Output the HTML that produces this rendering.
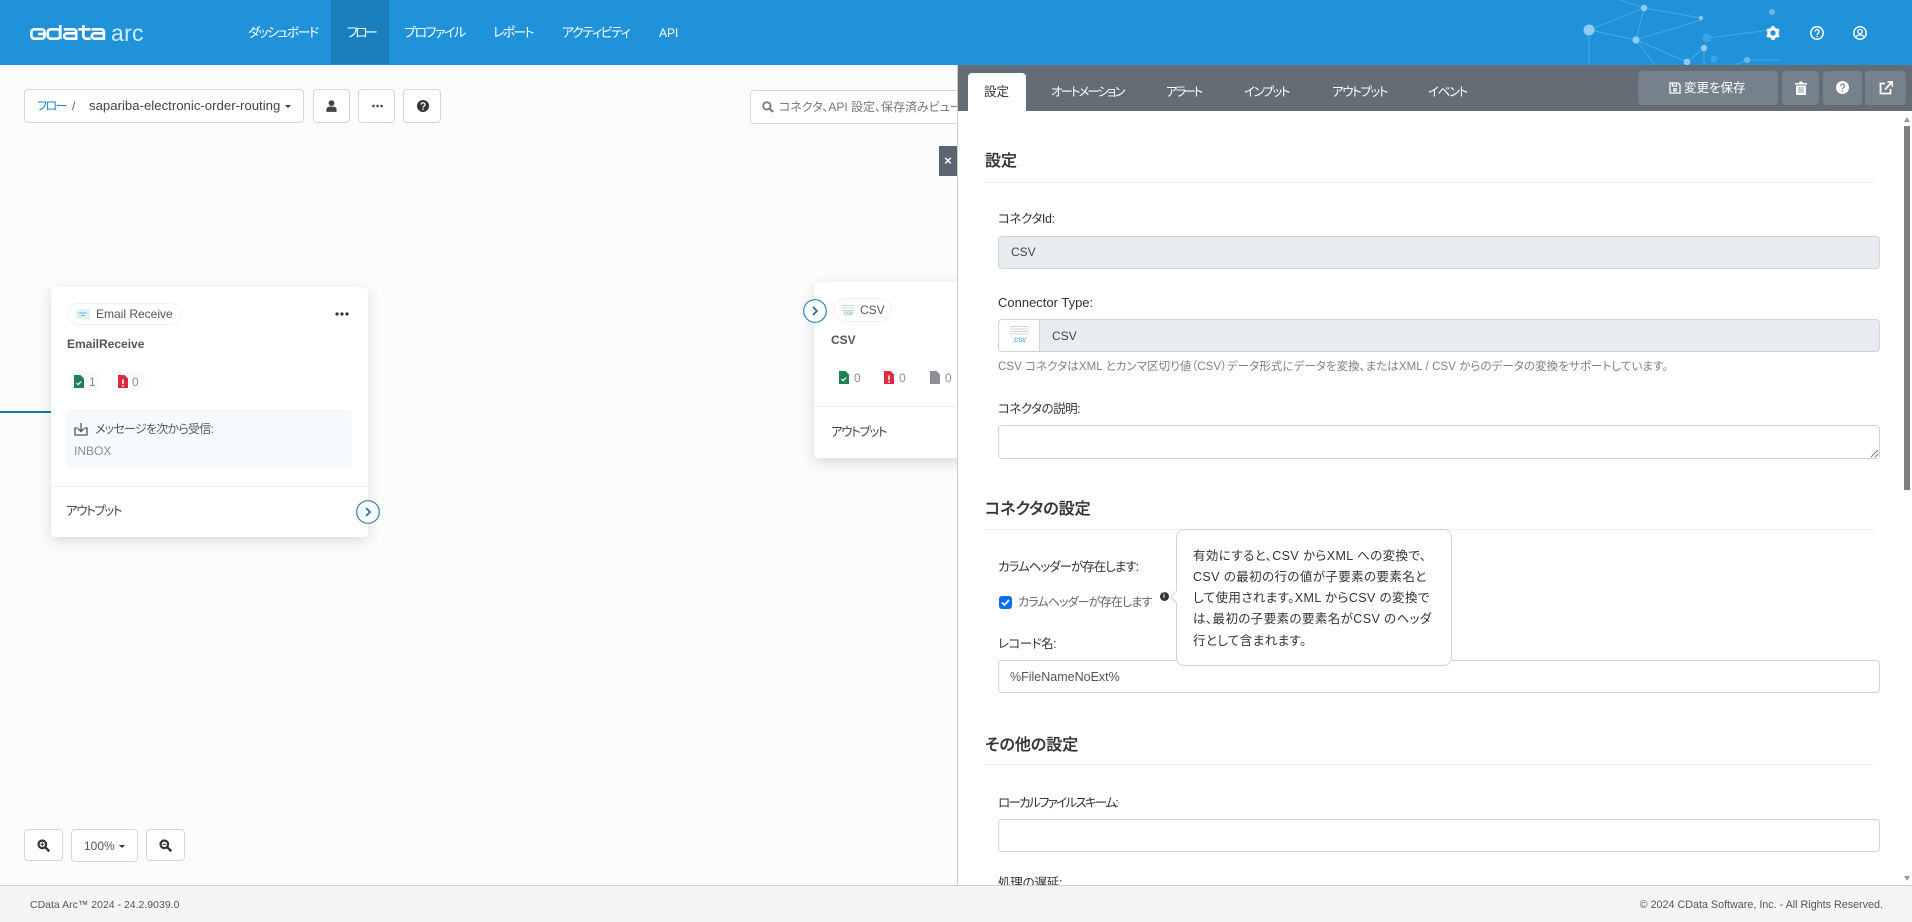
<!DOCTYPE html>
<html lang="ja"><head><meta charset="utf-8"><title>CData Arc</title>
<style>
*{box-sizing:border-box}
html,body{margin:0;padding:0;width:1912px;height:922px;overflow:hidden;background:#fcfcfc;font-family:"Liberation Sans","Noto Sans CJK JP",sans-serif;color:#333;font-feature-settings:"palt"}
.a{position:absolute}
.t{position:absolute;white-space:nowrap;line-height:20px;height:20px}
.box{position:absolute;background:#fff;border:1px solid #d4d7da;border-radius:4px}
.nav{color:#fff;font-size:13px;top:23px}
.tab{color:#fff;font-size:12.5px;top:82px}
.btn{position:absolute;background:#75818b;border-radius:4px;top:71px;height:34px}
.lab{font-size:12.5px;color:#333;left:998px;letter-spacing:-.2px}
.inp{position:absolute;left:998px;width:882px;border:1px solid #ced4da;border-radius:4px;background:#fff}
.dis{background:#e9ecef}
.h{font-size:16px;font-weight:500;color:#333;left:985px;-webkit-text-stroke:.2px #333}
.hr{position:absolute;left:985px;width:890px;height:1px;background:#eef0f1}
.card{position:absolute;background:#fff;border-radius:4px;box-shadow:0 4px 14px rgba(0,0,0,.14)}
.pill{position:absolute;background:#fff;border:1px solid #eef0f2;border-radius:12px}
.s{font-size:12px;color:#8a8f94}
.tip{position:absolute;left:1193px;white-space:nowrap;line-height:20px;height:20px;font-size:12.5px;color:#333;letter-spacing:.4px}
</style></head><body>

<!-- header -->
<div class="a" style="left:0;top:0;width:1912px;height:65px;background:#1f92d9"></div>
<div class="a" style="left:331px;top:0;width:58px;height:64px;background:#1b7fbe"></div>
<svg class="a" style="left:1500px;top:0" width="412" height="65" viewBox="1500 0 412 65">
<g stroke="#6fb9ea" stroke-width="1" fill="none" opacity=".55">
<path d="M1589 30L1644 8L1701 18M1644 8L1636 40L1589 30M1636 40L1701 20M1636 40L1687 62M1636 40L1655 65M1704 48L1687 62M1704 48V65M1707 38L1770 30M1747 60L1780 60M1747 60L1735 65M1589 30V65M1620 0L1644 8"/>
</g>
<g fill="#8fcaf3">
<circle cx="1589" cy="30" r="5.5"/><circle cx="1644" cy="8" r="3.2"/><circle cx="1701" cy="18" r="2"/><circle cx="1636" cy="40" r="3.6"/><circle cx="1704" cy="48" r="3.2"/><circle cx="1687" cy="62" r="3.4"/><circle cx="1747" cy="60" r="3.2" fill="#6fb5e3"/><circle cx="1772" cy="12" r="3" fill="#6fb5e3"/>
</g>
<circle cx="1707" cy="38" r="4.5" fill="#3ba4e6"/><circle cx="1714" cy="59" r="3.5" fill="#3ba4e6"/>
</svg>
<!-- logo -->
<svg class="a" style="left:30px;top:25px" width="78" height="16" viewBox="0 0 76 16" preserveAspectRatio="none" fill="none" stroke="#fff" stroke-width="2.6">
<rect x="1.3" y="4.3" width="13" height="9.4" rx="3"/><path d="M8 9h6"/>
<rect x="17.3" y="4.3" width="12" height="9.4" rx="3"/><path d="M29.5 0v14"/>
<path d="M33 4.3h9.5a2.5 2.5 0 0 1 2.5 2.5v6.9h-9a2.7 2.7 0 0 1 0-5.4h9"/>
<path d="M47 4.3h12M52 0v11a2.7 2.7 0 0 0 2.7 2.7H59"/>
<path d="M60 4.3h9.5a2.5 2.5 0 0 1 2.5 2.5v6.9h-9a2.7 2.7 0 0 1 0-5.4h9"/>
</svg>
<div class="t" style="left:111px;top:21px;color:#d5eafa;font-size:23px;letter-spacing:.3px;line-height:24px;height:24px">arc</div>
<div class="t nav" style="left:248px;letter-spacing:-1.6px">ダッシュボード</div>
<div class="t nav" style="left:347px;letter-spacing:-2.8px">フロー</div>
<div class="t nav" style="left:404px;letter-spacing:-1.5px">プロファイル</div>
<div class="t nav" style="left:493px;letter-spacing:-1.8px">レポート</div>
<div class="t nav" style="left:562px;letter-spacing:-1.4px">アクティビティ</div>
<div class="t nav" style="left:659px;font-size:12px">API</div>
<!-- header icons -->
<svg class="a" style="left:1766px;top:26px" width="14" height="14" viewBox="0 0 14 14"><circle cx="7" cy="7" r="4.2" fill="none" stroke="#fff" stroke-width="3"/><path d="M7 0V3M7 11v3M1 3.500l2.600 1.500M10.400 9L13 10.500M1 10.500L3.600 9M10.400 5L13 3.500" stroke="#fff" stroke-width="3"/></svg>
<svg class="a" style="left:1810px;top:26px" width="14" height="14" viewBox="0 0 14 14" fill="none" stroke="#fff"><circle cx="7" cy="7" r="6.2" stroke-width="1.5"/><path d="M5 5.6a2 2 0 1 1 3.1 1.7C7.3 7.8 7 8.1 7 8.9" stroke-width="1.3"/><circle cx="7" cy="10.5" r=".8" fill="#fff" stroke="none"/></svg>
<svg class="a" style="left:1853px;top:26px" width="14" height="14" viewBox="0 0 14 14" fill="none" stroke="#fff"><circle cx="7" cy="7" r="6.2" stroke-width="1.5"/><circle cx="7" cy="5.6" r="2.2" stroke-width="1.3"/><path d="M3 11c.8-1.6 2.2-2 4-2s3.2.4 4 2" stroke-width="1.3"/></svg>

<!-- toolbar left -->
<div class="box" style="left:24px;top:89px;width:280px;height:34px"></div>
<div class="t" style="left:37px;top:96px;font-size:12px;color:#1f7fc0;letter-spacing:-1.5px">フロー</div>
<div class="t" style="left:72px;top:96px;font-size:12px;color:#555">/</div>
<div class="t" style="left:89px;top:96px;font-size:13.2px;color:#444">sapariba-electronic-order-routing</div>
<div class="a" style="left:285px;top:105px;border-left:3px solid transparent;border-right:3px solid transparent;border-top:3px solid #333"></div>
<div class="box" style="left:313px;top:89px;width:37px;height:34px"></div>
<svg class="a" style="left:326px;top:100px" width="11" height="12" viewBox="0 0 13 14" fill="#444"><circle cx="6.500" cy="3.600" r="3.400"/><path d="M0.500 14v-2.500c0-2.400 2-3.700 3.600-3.700h4.800c1.600 0 3.600 1.300 3.600 3.700V14z"/></svg>
<div class="box" style="left:358px;top:89px;width:37px;height:34px"></div>
<svg class="a" style="left:372px;top:104px" width="11" height="4" fill="#444"><circle cx="1.400" cy="2" r="1.300"/><circle cx="5.500" cy="2" r="1.300"/><circle cx="9.600" cy="2" r="1.300"/></svg>
<div class="box" style="left:403px;top:89px;width:38px;height:34px"></div>
<svg class="a" style="left:417px;top:100px" width="12" height="12" viewBox="0 0 13 13"><circle cx="6.500" cy="6.500" r="6.500" fill="#333"/><path d="M4.600 5a2 2 0 1 1 3 1.700c-.8.500-1.100.8-1.100 1.500" stroke="#fff" stroke-width="1.300" fill="none"/><circle cx="6.500" cy="10" r=".9" fill="#fff"/></svg>
<div class="box" style="left:750px;top:90px;width:220px;height:34px"></div>
<svg class="a" style="left:762px;top:101px" width="12" height="12" viewBox="0 0 13 13" fill="none" stroke="#777"><circle cx="5.300" cy="5.300" r="4" stroke-width="1.900"/><path d="M8.400 8.400L12 12" stroke-width="2.200"/></svg>
<div class="t" style="left:779px;top:97px;font-size:12px;color:#777;width:178px;overflow:hidden">コネクタ、API 設定、保存済みビューを検索</div>
<div class="a" style="left:939px;top:146px;width:18px;height:30px;background:#5c6670;color:#fff;font-size:13px;font-weight:bold;line-height:30px;text-align:center">×</div>

<!-- flow line -->
<div class="a" style="left:0;top:410.500px;width:51px;height:2px;background:#1a75b5"></div>

<!-- Email card -->
<div class="card" style="left:51px;top:287px;width:317px;height:250px"></div>
<div class="pill" style="left:67px;top:303px;width:115px;height:22px"></div>
<svg class="a" style="left:76px;top:309px" width="14" height="10"><rect width="14" height="10" fill="#e4f1fa"/><path d="M3 4h8M5 6.500h4" stroke="#5aaede" stroke-width="1"/></svg>
<div class="t" style="left:96px;top:304px;font-size:12px;color:#555">Email Receive</div>
<svg class="a" style="left:335px;top:312px" width="14" height="4" fill="#333"><circle cx="2" cy="2" r="1.600"/><circle cx="7" cy="2" r="1.600"/><circle cx="12" cy="2" r="1.600"/></svg>
<div class="t" style="left:67px;top:334px;font-size:12px;font-weight:bold;color:#555">EmailReceive</div>
<div class="a" style="left:70px;top:371px;width:30px;height:21px;background:#fafbfb;border-radius:5px"></div>
<div class="a" style="left:113px;top:371px;width:32px;height:21px;background:#fafbfb;border-radius:5px"></div>
<svg class="a" style="left:74px;top:375px" width="10" height="13"><path d="M0 0h6.500L10 3.500V13H0z" fill="#1c8256"/><path d="M2.500 8l1.600 1.600 3-3" stroke="#fff" stroke-width="1.200" fill="none"/></svg>
<div class="t s" style="left:89px;top:372px">1</div>
<svg class="a" style="left:118px;top:375px" width="10" height="13"><path d="M0 0h6.500L10 3.500V13H0z" fill="#dc2a41"/><path d="M5 4.500v4.500M5 10v1.500" stroke="#fff" stroke-width="1.500"/></svg>
<div class="t s" style="left:132px;top:372px">0</div>
<div class="a" style="left:66px;top:410px;width:286px;height:58px;background:#f6fafd;border-radius:4px"></div>
<svg class="a" style="left:74px;top:422px" width="14" height="14" viewBox="0 0 14 14" fill="none" stroke="#555" stroke-width="1.300"><path d="M7 1v8M4 6.500L7 9.500 10 6.500M3.500 6H1v7h12V6h-2.500"/></svg>
<div class="t" style="left:95px;top:419px;font-size:12px;color:#555;letter-spacing:-.75px">メッセージを次から受信:</div>
<div class="t" style="left:74px;top:441px;font-size:12px;color:#8a8f94">INBOX</div>
<div class="a" style="left:51px;top:486px;width:317px;height:1px;background:#eff0f1"></div>
<div class="t" style="left:66px;top:501px;font-size:12.500px;color:#444;letter-spacing:-1.400px">アウトプット</div>
<svg class="a" style="left:356px;top:500px" width="24" height="24" viewBox="0 0 24 24" fill="#fff"><circle cx="12" cy="12" r="11.300" stroke="#2b7fb8" stroke-width="1.200"/><path d="M10 8l4 4-4 4" fill="none" stroke="#2b6ea6" stroke-width="1.800"/></svg>

<!-- CSV card -->
<div class="card" style="left:814px;top:282px;width:180px;height:176px"></div>
<svg class="a" style="left:803px;top:299px" width="24" height="24" viewBox="0 0 24 24" fill="#fff"><circle cx="12" cy="12" r="11.300" stroke="#2b7fb8" stroke-width="1.200"/><path d="M10 8l4 4-4 4" fill="none" stroke="#2b6ea6" stroke-width="1.800"/></svg>
<div class="pill" style="left:833px;top:298px;width:59px;height:24px"></div>
<svg class="a" style="left:841px;top:304px" width="14" height="13"><path d="M1 1.500h12M1 4h12M1 6.500h12" stroke="#ccd2d6"/></svg>
<div class="a" style="left:844px;top:311px;font-size:6px;line-height:7px;color:#39a3c7;font-style:italic">csv</div>
<div class="t" style="left:860px;top:300px;font-size:12px;color:#555">CSV</div>
<div class="t" style="left:831px;top:330px;font-size:12px;font-weight:bold;color:#555">CSV</div>
<svg class="a" style="left:839px;top:371px" width="10" height="13"><path d="M0 0h6.500L10 3.500V13H0z" fill="#1c8256"/><path d="M2.500 8l1.600 1.600 3-3" stroke="#fff" stroke-width="1.200" fill="none"/></svg>
<div class="t s" style="left:854px;top:368px">0</div>
<svg class="a" style="left:884px;top:371px" width="10" height="13"><path d="M0 0h6.500L10 3.500V13H0z" fill="#dc2a41"/><path d="M5 4.500v4.500M5 10v1.500" stroke="#fff" stroke-width="1.500"/></svg>
<div class="t s" style="left:899px;top:368px">0</div>
<svg class="a" style="left:930px;top:371px" width="10" height="13"><path d="M0 0h6.500L10 3.500V13H0z" fill="#8b8f93"/></svg>
<div class="t s" style="left:945px;top:368px">0</div>
<div class="a" style="left:814px;top:406px;width:150px;height:1px;background:#eff0f1"></div>
<div class="t" style="left:831px;top:422px;font-size:12.500px;color:#444;letter-spacing:-1.400px">アウトプット</div>

<!-- zoom controls -->
<div class="box" style="left:24px;top:829px;width:39px;height:32px"></div>
<svg class="a" style="left:37px;top:839px" width="13" height="13" viewBox="0 0 13 13" fill="none" stroke="#333"><circle cx="5.300" cy="5.300" r="3.800" stroke-width="2.200"/><path d="M8.500 8.500L12.300 12.300" stroke-width="2.400"/><path d="M3.500 5.300h3.600M5.300 3.500v3.600" stroke-width="1"/></svg>
<div class="box" style="left:71px;top:829px;width:67px;height:33px"></div>
<div class="t" style="left:84px;top:836px;font-size:12px;color:#555">100%</div>
<div class="a" style="left:119px;top:845px;border-left:3px solid transparent;border-right:3px solid transparent;border-top:3px solid #333"></div>
<div class="box" style="left:146px;top:829px;width:39px;height:32px"></div>
<svg class="a" style="left:159px;top:839px" width="13" height="13" viewBox="0 0 13 13" fill="none" stroke="#333"><circle cx="5.300" cy="5.300" r="3.800" stroke-width="2.200"/><path d="M8.500 8.500L12.300 12.300" stroke-width="2.400"/><path d="M3.500 5.300h3.600" stroke-width="1"/></svg>

<!-- right panel -->
<div class="a" style="left:957px;top:65px;width:955px;height:820px;background:#fff;border-left:1px solid #c9cccf"></div>
<div class="a" style="left:958px;top:65px;width:954px;height:46px;background:#646d75"></div>
<div class="a" style="left:968px;top:73px;width:58px;height:38px;background:#fff;border-radius:4px 4px 0 0"></div>
<div class="t tab" style="left:984px;color:#333">設定</div>
<div class="t tab" style="left:1051px;letter-spacing:-2px">オートメーション</div>
<div class="t tab" style="left:1166px;letter-spacing:-2.400px">アラート</div>
<div class="t tab" style="left:1244px;letter-spacing:-1.600px">インプット</div>
<div class="t tab" style="left:1332px;letter-spacing:-1.400px">アウトプット</div>
<div class="t tab" style="left:1428px;letter-spacing:-1.400px">イベント</div>
<div class="btn" style="left:1638px;width:140px"></div>
<svg class="a" style="left:1669px;top:82px" width="12" height="12" viewBox="0 0 12 12" fill="none" stroke="#fff" stroke-width="1.300"><path d="M1 1h8l2 2v8H1z"/><path d="M3.500 1v3h4V1"/><circle cx="6" cy="7.800" r="1.300"/></svg>
<div class="t" style="left:1684px;top:78px;font-size:12.500px;color:#fff">変更を保存</div>
<div class="btn" style="left:1782px;width:37px"></div>
<svg class="a" style="left:1795px;top:81px" width="12" height="14" viewBox="0 0 12 14" fill="#fff"><path d="M0 2h4l.6-1.500h2.800L8 2h4v1.500H0zM1 4.500h10V14H1z"/><path d="M4 6v6M6 6v6M8 6v6" stroke="#75818b" stroke-width=".8"/></svg>
<div class="btn" style="left:1823px;width:39px"></div>
<svg class="a" style="left:1836px;top:81px" width="13" height="13" viewBox="0 0 13 13"><circle cx="6.500" cy="6.500" r="6.500" fill="#fff"/><path d="M4.700 5a1.900 1.900 0 1 1 2.900 1.600c-.8.500-1.100.8-1.100 1.500" stroke="#75818b" stroke-width="1.200" fill="none"/><circle cx="6.500" cy="10" r=".8" fill="#75818b"/></svg>
<div class="btn" style="left:1865px;width:41px"></div>
<svg class="a" style="left:1879px;top:81px" width="14" height="14" viewBox="0 0 14 14" fill="none" stroke="#fff" stroke-width="1.800"><path d="M6 2.500H1.500V12.500H11.500V8"/><path d="M6 8.500L12.500 1.500M8.500 1h5v5"/></svg>

<!-- scrollbar -->
<div class="a" style="left:1898px;top:111px;width:14px;height:774px;background:#fff"></div>
<div class="a" style="left:1903.500px;top:117px;border-left:3.500px solid transparent;border-right:3.500px solid transparent;border-bottom:5px solid #999"></div>
<div class="a" style="left:1904px;top:126px;width:6px;height:364px;background:#7f7f7f"></div>
<div class="a" style="left:1903.500px;top:876px;border-left:3.500px solid transparent;border-right:3.500px solid transparent;border-top:5px solid #999"></div>

<!-- form -->
<div class="t h" style="top:152px">設定</div>
<div class="hr" style="top:182px"></div>
<div class="t lab" style="top:209px;letter-spacing:-.4px">コネクタId:</div>
<div class="inp dis" style="top:236px;height:33px"></div>
<div class="t" style="left:1011px;top:242px;font-size:12px;color:#444">CSV</div>
<div class="t lab" style="top:293px;font-size:13px;letter-spacing:0">Connector Type:</div>
<div class="inp dis" style="top:319px;height:33px"></div>
<div class="a" style="left:998px;top:319px;width:42px;height:33px;background:#fff;border:1px solid #ced4da;border-radius:4px 0 0 4px"></div>
<svg class="a" style="left:1008px;top:325px" width="22" height="14"><path d="M2 1.500h19M2 4h19M2 6.500h19M2 9h19" stroke="#d2d7da"/></svg>
<div class="a" style="left:1012px;top:335px;font-size:8px;line-height:9px;color:#3ba5c9">.csv</div>
<div class="t" style="left:1052px;top:326px;font-size:12px;color:#444">CSV</div>
<div class="t" style="left:998px;top:357px;font-size:11.500px;color:#7b838a;letter-spacing:.07px">CSV コネクタはXML とカンマ区切り値（CSV）データ形式にデータを変換、またはXML / CSV からのデータの変換をサポートしています。</div>
<div class="t lab" style="top:399px;letter-spacing:-.5px">コネクタの説明:</div>
<div class="inp" style="top:425px;height:34px"></div>
<svg class="a" style="left:1870px;top:449px" width="9" height="9" stroke="#777"><path d="M1 8L8 1M5 8L8 5"/></svg>

<div class="t h" style="top:500px">コネクタの設定</div>
<div class="hr" style="top:529px"></div>
<div class="t lab" style="top:557px;letter-spacing:-1px">カラムヘッダーが存在します:</div>
<div class="a" style="left:999px;top:596px;width:13px;height:13px;background:#0d6efd;border-radius:3px"></div>
<svg class="a" style="left:999px;top:596px" width="13" height="13"><path d="M3 6.500l2.500 2.500 4.500-5" stroke="#fff" stroke-width="1.800" fill="none"/></svg>
<div class="t" style="left:1018px;top:592px;font-size:12px;color:#666;letter-spacing:-.85px">カラムヘッダーが存在します</div>
<div class="a" style="left:1159.500px;top:592px;width:9px;height:9px;border-radius:50%;background:#333;color:#fff;font-size:7px;line-height:9px;text-align:center;font-weight:bold">i</div>

<div class="t lab" style="top:634px;letter-spacing:-.5px">レコード名:</div>
<div class="inp" style="top:660px;height:33px"></div>
<div class="t" style="left:1010px;top:667px;font-size:12.500px;color:#555">%FileNameNoExt%</div>

<div class="t h" style="top:736px">その他の設定</div>
<div class="hr" style="top:764px"></div>
<div class="t lab" style="top:793px;letter-spacing:-1.700px">ローカルファイルスキーム:</div>
<div class="inp" style="top:819px;height:33px"></div>
<div class="t lab" style="top:873px">処理の遅延:</div>

<!-- tooltip -->
<div class="a" style="left:1176px;top:529px;width:276px;height:137px;background:#fff;border:1px solid #d0d3d6;border-radius:8px"></div>
<div class="a" style="left:1171.500px;top:592px;width:10px;height:10px;background:#fff;border-left:1px solid #d0d3d6;border-bottom:1px solid #d0d3d6;transform:rotate(45deg)"></div>
<div class="tip" style="top:546px">有効にすると、CSV からXML への変換で、</div>
<div class="tip" style="top:567px">CSV の最初の行の値が子要素の要素名と</div>
<div class="tip" style="top:588px">して使用されます。XML からCSV の変換で</div>
<div class="tip" style="top:609px">は、最初の子要素の要素名がCSV のヘッダ</div>
<div class="tip" style="top:631px">行として含まれます。</div>

<!-- footer -->
<div class="a" style="left:0;top:885px;width:1912px;height:37px;background:#f5f5f5;border-top:1px solid #cfcfcf"></div>
<div class="t" style="left:30px;top:895px;font-size:10.500px;color:#555">CData Arc™ 2024 - 24.2.9039.0</div>
<div class="t" style="right:29px;top:895px;font-size:10.750px;color:#555">© 2024 CData Software, Inc. - All Rights Reserved.</div>
</body></html>
